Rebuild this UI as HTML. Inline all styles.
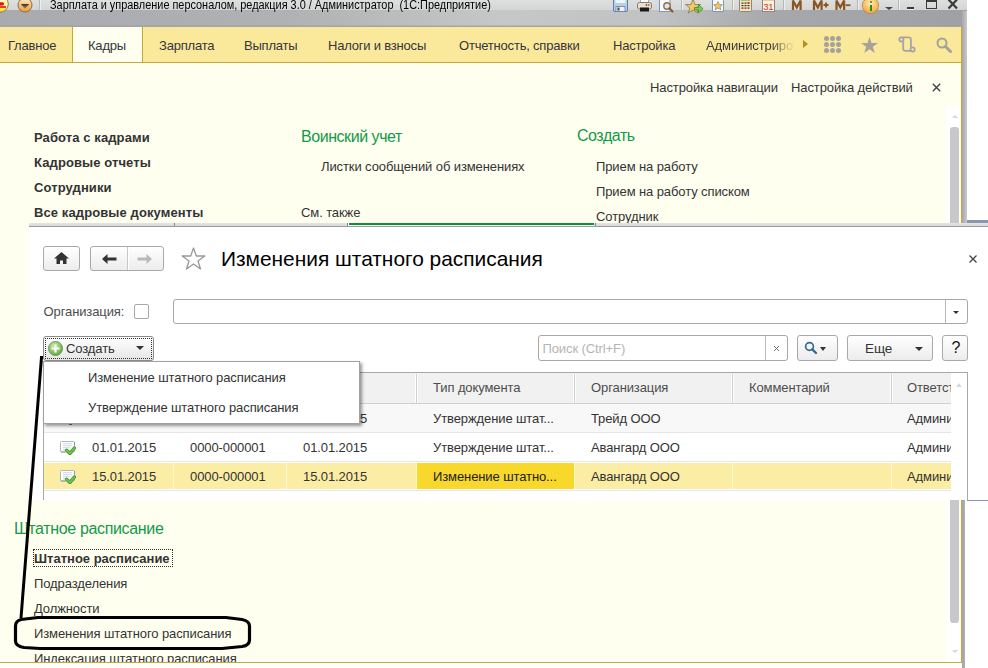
<!DOCTYPE html>
<html><head><meta charset="utf-8"><style>
html,body{margin:0;padding:0;width:988px;height:668px;overflow:hidden;background:#fff;position:relative}
body{font-family:"Liberation Sans",sans-serif}
.t{position:absolute;white-space:pre;font-family:"Liberation Sans",sans-serif}
</style></head><body>
<div style="position:absolute;left:0px;top:0px;width:967px;height:27px;background:linear-gradient(to bottom,#dedfdf 0,#d4d5d5 10px,#c6c7c8 10px,#c6c7c8 25px,#a4a5ab 26px,#a4a5ab 27px)"></div>
<div style="position:absolute;left:0px;top:10px;width:967px;height:16px;background:linear-gradient(to right,rgba(150,151,155,.6) 0,rgba(150,151,155,.45) 30%,rgba(200,201,201,0) 52%,rgba(150,151,155,.1) 68%,rgba(150,151,155,.65) 80%,rgba(150,151,155,.8) 100%)"></div>
<svg style="position:absolute;left:0;top:0" width="40" height="16" viewBox="0 0 40 16"><defs><linearGradient id="lg1" x1="0" y1="0" x2="0" y2="1"><stop offset="0" stop-color="#fffbe0"/><stop offset=".55" stop-color="#fff7a0"/><stop offset="1" stop-color="#f8e000"/></linearGradient><linearGradient id="lg2" x1="0" y1="0" x2="0" y2="1"><stop offset="0" stop-color="#fff3dc"/><stop offset=".5" stop-color="#f8c070"/><stop offset="1" stop-color="#f0a030"/></linearGradient><linearGradient id="lg3" x1="0" y1="0" x2="0" y2="1"><stop offset="0" stop-color="#3a3328"/><stop offset="1" stop-color="#9a8a70"/></linearGradient></defs><circle cx="0" cy="4" r="8.3" fill="url(#lg1)" stroke="#9a7a62" stroke-width="1"/><path d="M0 2.2 h2.5 a1.6 1.6 0 1 1 0 3.2 h-2.5z" fill="#e8101a"/><rect x="0" y="6.2" width="6" height="1.6" fill="#e8101a"/><circle cx="25" cy="5" r="7" fill="url(#lg2)" stroke="#8a6a50" stroke-width="1"/><path d="M20.8 4 L29.2 4 L25 8.8 Z" fill="url(#lg3)"/></svg>
<div style="position:absolute;left:39px;top:0px;width:1px;height:10px;background:#b8b8b8;box-shadow:1px 0 0 #eee"></div>
<div class="t" style="left:50px;top:-1.16px;font-size:12px;line-height:12px;color:#000;font-weight:normal;transform:scaleX(0.908);transform-origin:0 0">Зарплата и управление персоналом, редакция 3.0 / Администратор &nbsp;(1С:Предприятие)</div>
<svg style="position:absolute;left:600px;top:0" width="185" height="14" viewBox="0 0 185 14"><g transform="translate(13,0)"><rect x="0.5" y="-2" width="14" height="13.5" rx="1.5" fill="#b8d0ea" stroke="#5d7fa5"/><rect x="2.5" y="-2" width="10" height="5" fill="#eef5fc"/><rect x="3" y="6.5" width="9" height="5" fill="#f0f0f0" stroke="#5d7fa5" stroke-width=".8"/><rect x="4.5" y="7.5" width="2" height="3" fill="#444"/></g><g transform="translate(37,0)"><rect x="3.5" y="-2" width="8" height="5" fill="#fff" stroke="#999" stroke-width=".8"/><rect x="0.5" y="2.5" width="14" height="6.5" rx="2" fill="#eadfd6" stroke="#8d7666"/><rect x="3" y="7.5" width="9" height="4" fill="#1a1a1a"/><circle cx="9.5" cy="5" r=".9" fill="#e02020"/><circle cx="11.8" cy="5" r=".9" fill="#30b030"/></g><g transform="translate(59,0)"><rect x="0.5" y="-2" width="10.5" height="13.5" fill="#f7fafd" stroke="#7a97bb"/><circle cx="8" cy="6" r="3.2" fill="#d8e6f5" stroke="#9a6a40" stroke-width="1.4"/><path d="M10.3 8.3 L13.5 11.5" stroke="#8a5a30" stroke-width="2.2" stroke-linecap="round"/></g><g transform="translate(86,0)"><path d="M7 -1 L9 4.5 L14.5 4.5 L10.2 8 L11.8 13 L7 10 L2.2 13 L3.8 8 L-0.5 4.5 L5 4.5 Z" fill="#f4c860" stroke="#857650" stroke-width=".8"/><path d="M8.5 7.5 h4 v-3 l4.5 4.2 l-4.5 4.2 v-3 h-4z" fill="#7acc50" stroke="#3d8a2a" stroke-width=".8"/></g><g transform="translate(112,0)"><path d="M0.5 -2 H9 L11.5 0.5 V11.5 H0.5 Z" fill="#f7fafd" stroke="#7a97bb"/><path d="M6 1.5 L7.3 4.5 L10.3 4.7 L8 6.7 L8.8 9.8 L6 8 L3.2 9.8 L4 6.7 L1.7 4.7 L4.7 4.5 Z" fill="#f4c860" stroke="#857650" stroke-width=".6"/></g><g transform="translate(139,0)"><rect x="0.5" y="-2" width="12" height="13.5" rx="1" fill="#f8e2b8" stroke="#8a8a7a"/><rect x="2" y="-2" width="9" height="2.5" fill="#3aa63a"/><g fill="#333"><rect x="2.5" y="2.5" width="2" height="1.2"/><rect x="5.5" y="2.5" width="2" height="1.2"/><rect x="2.5" y="5" width="2" height="1.2"/><rect x="5.5" y="5" width="2" height="1.2"/><rect x="8.5" y="5" width="2" height="1.2"/><rect x="2.5" y="7.5" width="2" height="1.2"/><rect x="5.5" y="7.5" width="2" height="1.2"/><rect x="8.5" y="7.5" width="2" height="1.2"/></g><rect x="8.5" y="2" width="2" height="2" fill="#e02020"/></g><g transform="translate(162,0)"><rect x="0.5" y="-2" width="12" height="13.5" fill="#fdf2e2" stroke="#8a8a7a"/><rect x="1" y="-2" width="11" height="2.5" fill="#e8a050"/><text x="1.2" y="10.3" font-family="Liberation Sans" font-size="9.5" fill="#e02a1a" letter-spacing="-0.3">31</text></g></svg>
<div style="position:absolute;left:681px;top:0px;width:1px;height:10px;background:#b8b8b8;box-shadow:1px 0 0 #eee"></div>
<div style="position:absolute;left:732px;top:0px;width:1px;height:10px;background:#b8b8b8;box-shadow:1px 0 0 #eee"></div>
<div style="position:absolute;left:783px;top:0px;width:1px;height:10px;background:#b8b8b8;box-shadow:1px 0 0 #eee"></div>
<svg style="position:absolute;left:785px;top:0" width="70" height="12" viewBox="0 0 70 12" fill="none" stroke="#8b5526" stroke-width="2.2" stroke-linejoin="miter"><path d="M8 10 V0.5 L11.8 7.5 L15.6 0.5 V10"/><path d="M29 10 V0.5 L32.8 7.5 L36.6 0.5 V10"/><path d="M38.5 5 H43.5 M41 2.5 V7.5" stroke-width="1.8"/><path d="M51.5 10 V0.5 L55.3 7.5 L59.1 0.5 V10"/><path d="M60.5 5.2 H65.5" stroke-width="1.8"/></svg>
<div style="position:absolute;left:857px;top:0px;width:1px;height:10px;background:#b8b8b8;box-shadow:1px 0 0 #eee"></div>
<div style="position:absolute;left:863px;top:-2px;width:15px;height:15px;border-radius:50%;background:radial-gradient(circle at 50% 35%,#ffe9b0,#f4b34a 70%,#d98b2a);box-shadow:0 0 0 1px #c68a40"></div>
<div style="position:absolute;left:869.5px;top:4.5px;width:2.5px;height:6px;background:#2a8a2a"></div>
<div style="position:absolute;left:869.5px;top:1px;width:2.5px;height:2.2px;background:#2a8a2a;border-radius:1px"></div>
<div style="position:absolute;left:885px;top:7px;width:0;height:0;border-left:4.5px solid transparent;border-right:4.5px solid transparent;border-top:3px solid #444"></div>
<div style="position:absolute;left:898px;top:0px;width:1px;height:10px;background:#b8b8b8;box-shadow:1px 0 0 #eee"></div>
<div style="position:absolute;left:907px;top:7px;width:7px;height:2px;background:#3a3a3a;box-shadow:0 1px 0 #eee"></div>
<div style="position:absolute;left:926px;top:-1px;width:11px;height:10px;border:1.5px solid #3a3a3a;border-top-width:3px;box-sizing:border-box"></div>
<svg style="position:absolute;left:947px;top:-1px" width="12" height="11" viewBox="0 0 12 11"><path d="M1.5 0.5 L10 9.5 M10 0.5 L1.5 9.5" stroke="#3a3a3a" stroke-width="2.2"/></svg>
<div style="position:absolute;left:962px;top:11px;width:5px;height:212px;background:linear-gradient(to right,#a6a7aa,#c9c9cb)"></div>
<div style="position:absolute;left:962px;top:500px;width:3px;height:168px;background:linear-gradient(to right,#a0a3b0,#b0b0b0)"></div>
<div style="position:absolute;left:0px;top:27px;width:962px;height:36px;background:#fbe99b;border-bottom:1px solid #c8a832;border-right:1px solid #c8a832;box-sizing:border-box"></div>
<div style="position:absolute;left:72px;top:27px;width:71px;height:36px;background:#fffff0;border-left:1px solid #c8a832;border-right:1px solid #c8a832;border-bottom:1px solid #c8a832;box-sizing:border-box"></div>
<div class="t" style="left:8px;top:39.00px;font-size:13px;line-height:13px;color:#35353d;font-weight:normal;letter-spacing:-0.2px">Главное</div>
<div class="t" style="left:88px;top:39.00px;font-size:13px;line-height:13px;color:#35353d;font-weight:normal;letter-spacing:-0.2px">Кадры</div>
<div class="t" style="left:159px;top:39.00px;font-size:13px;line-height:13px;color:#35353d;font-weight:normal;letter-spacing:-0.2px">Зарплата</div>
<div class="t" style="left:244px;top:39.00px;font-size:13px;line-height:13px;color:#35353d;font-weight:normal;letter-spacing:-0.2px">Выплаты</div>
<div class="t" style="left:328px;top:39.00px;font-size:13px;line-height:13px;color:#35353d;font-weight:normal;letter-spacing:-0.2px">Налоги и взносы</div>
<div class="t" style="left:459px;top:39.00px;font-size:13px;line-height:13px;color:#35353d;font-weight:normal;letter-spacing:-0.2px">Отчетность, справки</div>
<div class="t" style="left:613px;top:39.00px;font-size:13px;line-height:13px;color:#35353d;font-weight:normal;letter-spacing:-0.2px">Настройка</div>
<div class="t" style="left:706px;top:39.00px;font-size:13px;line-height:13px;color:#3a3a3a;font-weight:normal;letter-spacing:-0.1px;width:87px;overflow:hidden;-webkit-mask-image:linear-gradient(to right,#000 76%,rgba(0,0,0,.3) 92%,rgba(0,0,0,.1) 100%)">Администрирование</div>
<div style="position:absolute;left:803px;top:40px;width:0;height:0;border-top:4.5px solid transparent;border-bottom:4.5px solid transparent;border-left:5.5px solid #b09218"></div>
<svg style="position:absolute;left:824px;top:36px" width="17" height="17" viewBox="0 0 17 17" fill="#a5a29a"><circle cx="2.5" cy="2.5" r="2.5"/><circle cx="2.5" cy="8.5" r="2.5"/><circle cx="2.5" cy="14.5" r="2.5"/><circle cx="8.5" cy="2.5" r="2.5"/><circle cx="8.5" cy="8.5" r="2.5"/><circle cx="8.5" cy="14.5" r="2.5"/><circle cx="14.5" cy="2.5" r="2.5"/><circle cx="14.5" cy="8.5" r="2.5"/><circle cx="14.5" cy="14.5" r="2.5"/></svg>
<svg style="position:absolute;left:861px;top:37px" width="17" height="16" viewBox="0 0 17 16"><path d="M8.5 0 L10.5 6 L17 6 L11.8 9.8 L13.8 16 L8.5 12.2 L3.2 16 L5.2 9.8 L0 6 L6.5 6 Z" fill="#a5a29a"/></svg>
<svg style="position:absolute;left:895px;top:33px" width="22" height="22" viewBox="0 0 22 22" fill="none" stroke="#a3a3aa" stroke-width="1.8"><circle cx="6.4" cy="6.4" r="2.1"/><path d="M6.6 4.4 L13.6 4.4 Q15.9 4.4 15.9 6.7 L15.9 14.5"/><path d="M8.2 8.4 L8.2 15.4 Q8.2 17.8 10.6 17.8 L16.5 17.8"/><circle cx="17.6" cy="16.4" r="2.1"/></svg>
<svg style="position:absolute;left:936px;top:37px" width="16" height="16" viewBox="0 0 16 16" fill="none" stroke="#a5a29a"><circle cx="6" cy="6" r="4.5" stroke-width="2"/><path d="M9.5 9.5 L14.5 14.5" stroke-width="3" stroke-linecap="round"/></svg>
<div style="position:absolute;left:0px;top:63px;width:962px;height:600px;background:#fffff0;border-right:1px solid #c8a832;border-bottom:1px solid #c8a832;box-sizing:border-box"></div>
<div style="position:absolute;left:946px;top:107px;width:15px;height:555px;background:#fff"></div>
<div style="position:absolute;left:950px;top:127px;width:9px;height:496px;background:#c8c8c8;border-radius:3px"></div>
<div style="position:absolute;left:951.5px;top:115px;width:0;height:0;border-left:3px solid transparent;border-right:3px solid transparent;border-bottom:3.5px solid #d8d8d8"></div>
<div style="position:absolute;left:951.5px;top:650px;width:0;height:0;border-left:3px solid transparent;border-right:3px solid transparent;border-top:3.5px solid #d8d8d8"></div>
<div class="t" style="left:650px;top:81.00px;font-size:13px;line-height:13px;color:#333;font-weight:normal;letter-spacing:-0.1px;">Настройка навигации</div>
<div class="t" style="left:791px;top:81.00px;font-size:13px;line-height:13px;color:#333;font-weight:normal;letter-spacing:-0.1px;">Настройка действий</div>
<svg style="position:absolute;left:932px;top:83px" width="9" height="9" viewBox="0 0 9 9"><path d="M.8 .8 L8.2 8.2 M8.2 .8 L.8 8.2" stroke="#444" stroke-width="1.4"/></svg>
<div class="t" style="left:34px;top:131.00px;font-size:13px;line-height:13px;color:#333;font-weight:bold;letter-spacing:0.1px">Работа с кадрами</div>
<div class="t" style="left:34px;top:156.00px;font-size:13px;line-height:13px;color:#333;font-weight:bold;letter-spacing:0.1px">Кадровые отчеты</div>
<div class="t" style="left:34px;top:181.00px;font-size:13px;line-height:13px;color:#333;font-weight:bold;letter-spacing:0.1px">Сотрудники</div>
<div class="t" style="left:34px;top:206.00px;font-size:13px;line-height:13px;color:#333;font-weight:bold;letter-spacing:0.1px">Все кадровые документы</div>
<div class="t" style="left:301px;top:129.46px;font-size:16px;line-height:16px;color:#12994a;font-weight:normal;letter-spacing:-0.45px">Воинский учет</div>
<div class="t" style="left:321px;top:160.00px;font-size:13px;line-height:13px;color:#333;font-weight:normal;letter-spacing:-0.1px;">Листки сообщений об изменениях</div>
<div class="t" style="left:301px;top:206.00px;font-size:13px;line-height:13px;color:#333;font-weight:normal;letter-spacing:-0.1px;">См. также</div>
<div class="t" style="left:577px;top:128.46px;font-size:16px;line-height:16px;color:#12994a;font-weight:normal;letter-spacing:-0.45px">Создать</div>
<div class="t" style="left:596px;top:160.00px;font-size:13px;line-height:13px;color:#333;font-weight:normal;letter-spacing:-0.1px;">Прием на работу</div>
<div class="t" style="left:596px;top:185.00px;font-size:13px;line-height:13px;color:#333;font-weight:normal;letter-spacing:-0.1px;">Прием на работу списком</div>
<div class="t" style="left:596px;top:210.00px;font-size:13px;line-height:13px;color:#333;font-weight:normal;letter-spacing:-0.1px;">Сотрудник</div>
<div class="t" style="left:14px;top:521.46px;font-size:16px;line-height:16px;color:#12994a;font-weight:normal;letter-spacing:-0.35px">Штатное расписание</div>
<div class="t" style="left:34px;top:552.00px;font-size:13px;line-height:13px;color:#333;font-weight:bold;">Штатное расписание</div>
<div style="position:absolute;left:33px;top:549px;width:140px;height:18px;border:1px dotted #333;box-sizing:border-box"></div>
<div class="t" style="left:34px;top:577.00px;font-size:13px;line-height:13px;color:#333;font-weight:normal;letter-spacing:-0.1px;">Подразделения</div>
<div class="t" style="left:34px;top:602.00px;font-size:13px;line-height:13px;color:#333;font-weight:normal;letter-spacing:-0.1px;">Должности</div>
<div class="t" style="left:34px;top:627.00px;font-size:13px;line-height:13px;color:#333;font-weight:normal;letter-spacing:-0.1px;">Изменения штатного расписания</div>
<div class="t" style="left:34px;top:652.00px;font-size:13px;line-height:13px;color:#333;font-weight:normal;letter-spacing:-0.1px;">Индексация штатного расписания</div>
<div style="position:absolute;left:0px;top:662px;width:962px;height:1px;background:#c8a832"></div>
<div style="position:absolute;left:0px;top:663px;width:962px;height:5px;background:#fff"></div>
<div style="position:absolute;left:29px;top:223px;width:959px;height:4px;background:linear-gradient(to bottom,#e4e4e4 0,#dadada 3px,#9c9c9c 3px)"></div>
<div style="position:absolute;left:174px;top:223px;width:1px;height:3px;background:#8a8a8a"></div>
<div style="position:absolute;left:347px;top:223px;width:1px;height:3px;background:#8a8a8a"></div>
<div style="position:absolute;left:595px;top:223px;width:1px;height:3px;background:#8a8a8a"></div>
<div style="position:absolute;left:348px;top:223px;width:246px;height:3px;background:#fff"></div>
<div style="position:absolute;left:349px;top:223px;width:245px;height:2px;background:#0e8f3c"></div>
<div style="position:absolute;left:29px;top:227px;width:959px;height:273px;background:#fff"></div>
<div style="position:absolute;left:43px;top:246px;width:37px;height:25px;border:1px solid #a9a9a9;border-radius:3px;background:linear-gradient(#ffffff,#ececec);box-sizing:border-box"></div>
<svg style="position:absolute;left:54px;top:252px" width="15" height="12" viewBox="0 0 15 12"><path d="M7.5 0 L15 6.5 L12.5 6.5 L12.5 12 L9 12 L9 8.5 L6 8.5 L6 12 L2.5 12 L2.5 6.5 L0 6.5 Z" fill="#333"/></svg>
<div style="position:absolute;left:90px;top:246px;width:74px;height:25px;border:1px solid #a9a9a9;border-radius:3px;background:linear-gradient(#ffffff,#ececec);box-sizing:border-box"></div>
<div style="position:absolute;left:127px;top:247px;width:1px;height:23px;background:#c8c8c8;box-shadow:1px 0 0 #fff"></div>
<svg style="position:absolute;left:102px;top:254px" width="15" height="10" viewBox="0 0 15 10"><path d="M0 5 L5.5 0 L5.5 3.5 L14.5 3.5 L14.5 6.5 L5.5 6.5 L5.5 10 Z" fill="#333"/></svg>
<svg style="position:absolute;left:137px;top:254px" width="15" height="10" viewBox="0 0 15 10"><path d="M15 5 L9.5 0 L9.5 3.5 L0.5 3.5 L0.5 6.5 L9.5 6.5 L9.5 10 Z" fill="#b9b9b9"/></svg>
<svg style="position:absolute;left:181px;top:247px" width="25" height="23" viewBox="0 0 25 23"><path d="M12.5 1 L15.3 9 L23.8 9 L17 14 L19.5 22 L12.5 17 L5.5 22 L8 14 L1.2 9 L9.7 9 Z" fill="#fff" stroke="#999" stroke-width="1.3" stroke-linejoin="round"/></svg>
<div class="t" style="left:221px;top:249.31px;font-size:20.9px;line-height:20.9px;color:#000;font-weight:normal;">Изменения штатного расписания</div>
<svg style="position:absolute;left:969px;top:255px" width="8" height="8" viewBox="0 0 8 8"><path d="M.5 .5 L7.5 7.5 M7.5 .5 L.5 7.5" stroke="#444" stroke-width="1.3"/></svg>
<div class="t" style="left:43.5px;top:305.00px;font-size:13px;line-height:13px;color:#4d4d4d;font-weight:normal;letter-spacing:-0.1px;">Организация:</div>
<div style="position:absolute;left:134px;top:304px;width:15px;height:15px;border:1px solid #a8a8a8;border-radius:2px;background:#fff;box-sizing:border-box"></div>
<div style="position:absolute;left:173px;top:299px;width:795px;height:25px;border:1px solid #a8a8a8;border-radius:3px;background:#fff;box-sizing:border-box"></div>
<div style="position:absolute;left:945px;top:300px;width:1px;height:23px;background:#b8b8b8"></div>
<div style="position:absolute;left:953px;top:311px;width:0;height:0;border-left:3px solid transparent;border-right:3px solid transparent;border-top:3px solid #333"></div>
<div style="position:absolute;left:43px;top:336px;width:111px;height:25px;border:1px solid #8c8c8c;border-radius:3px;background:linear-gradient(#ffffff,#e6e6e6);box-sizing:border-box"></div>
<div style="position:absolute;left:45px;top:338px;width:107px;height:21px;border:1px dotted #333;box-sizing:border-box"></div>
<svg style="position:absolute;left:48px;top:341px" width="15" height="15" viewBox="0 0 15 15"><defs><radialGradient id="pg" cx=".4" cy=".3" r=".8"><stop offset="0" stop-color="#c8e8a8"/><stop offset=".6" stop-color="#84c060"/><stop offset="1" stop-color="#5a9a3a"/></radialGradient></defs><circle cx="7.5" cy="7.5" r="7" fill="url(#pg)" stroke="#6a9a58" stroke-width="1"/><path d="M7.5 3.5 V11.5 M3.5 7.5 H11.5" stroke="#fff" stroke-width="2.2"/></svg>
<div class="t" style="left:66px;top:342.00px;font-size:13px;line-height:13px;color:#333;font-weight:normal;letter-spacing:-0.1px;">Создать</div>
<div style="position:absolute;left:136px;top:346px;width:0;height:0;border-left:4px solid transparent;border-right:4px solid transparent;border-top:4px solid #333"></div>
<div style="position:absolute;left:538px;top:335px;width:250px;height:26px;border:1px solid #a8a8a8;border-radius:3px;background:#fff;box-sizing:border-box"></div>
<div style="position:absolute;left:765px;top:336px;width:1px;height:24px;background:#b8b8b8"></div>
<div class="t" style="left:542.5px;top:342.00px;font-size:13px;line-height:13px;color:#b4b4b4;font-weight:normal;letter-spacing:-0.1px;">Поиск (Ctrl+F)</div>
<svg style="position:absolute;left:773px;top:345px" width="7" height="7" viewBox="0 0 7 7"><path d="M1 1 L6 6 M6 1 L1 6" stroke="#666" stroke-width="0.9"/></svg>
<div style="position:absolute;left:797px;top:335px;width:41px;height:26px;border:1px solid #a9a9a9;border-radius:3px;background:linear-gradient(#ffffff,#ececec);box-sizing:border-box"></div>
<svg style="position:absolute;left:804px;top:341px" width="14" height="14" viewBox="0 0 14 14" fill="none" stroke="#33689a"><circle cx="5.5" cy="5.5" r="3.9" stroke-width="1.7"/><path d="M8.3 8.3 L12 12" stroke-width="2.4" stroke-linecap="round"/></svg>
<div style="position:absolute;left:820px;top:346.5px;width:0;height:0;border-left:3.5px solid transparent;border-right:3.5px solid transparent;border-top:4px solid #333"></div>
<div style="position:absolute;left:847px;top:335px;width:86px;height:26px;border:1px solid #a9a9a9;border-radius:3px;background:linear-gradient(#ffffff,#ececec);box-sizing:border-box"></div>
<div class="t" style="left:865px;top:342.00px;font-size:13px;line-height:13px;color:#333;font-weight:normal;letter-spacing:-0.1px;font-size:13.5px">Еще</div>
<div style="position:absolute;left:914.5px;top:346.5px;width:0;height:0;border-left:4px solid transparent;border-right:4px solid transparent;border-top:4px solid #333"></div>
<div style="position:absolute;left:942px;top:335px;width:26px;height:26px;border:1px solid #a9a9a9;border-radius:3px;background:linear-gradient(#ffffff,#ececec);box-sizing:border-box"></div>
<div class="t" style="left:951.5px;top:339.96px;font-size:16px;line-height:16px;color:#111;font-weight:normal;">?</div>
<div style="position:absolute;left:43px;top:372px;width:925px;height:128px;border:1px solid #a8a8a8;border-bottom:none;background:#fff;box-sizing:border-box"></div>
<div style="position:absolute;left:44px;top:373px;width:907px;height:31px;background:#f1f1f1;border-bottom:1px solid #d0d0d0;box-sizing:border-box"></div>
<div style="position:absolute;left:173px;top:374px;width:1px;height:29px;background:#cfcfcf;box-shadow:1px 0 0 #fff,-1px 0 0 #fff"></div>
<div style="position:absolute;left:286px;top:374px;width:1px;height:29px;background:#cfcfcf;box-shadow:1px 0 0 #fff,-1px 0 0 #fff"></div>
<div style="position:absolute;left:416px;top:374px;width:1px;height:29px;background:#cfcfcf;box-shadow:1px 0 0 #fff,-1px 0 0 #fff"></div>
<div style="position:absolute;left:574px;top:374px;width:1px;height:29px;background:#cfcfcf;box-shadow:1px 0 0 #fff,-1px 0 0 #fff"></div>
<div style="position:absolute;left:732px;top:374px;width:1px;height:29px;background:#cfcfcf;box-shadow:1px 0 0 #fff,-1px 0 0 #fff"></div>
<div style="position:absolute;left:891px;top:374px;width:1px;height:29px;background:#cfcfcf;box-shadow:1px 0 0 #fff,-1px 0 0 #fff"></div>
<div class="t" style="left:433px;top:381.00px;font-size:13px;line-height:13px;color:#4d4d4d;font-weight:normal;letter-spacing:-0.1px;">Тип документа</div>
<div class="t" style="left:591px;top:381.00px;font-size:13px;line-height:13px;color:#4d4d4d;font-weight:normal;letter-spacing:-0.1px;">Организация</div>
<div class="t" style="left:749px;top:381.00px;font-size:13px;line-height:13px;color:#4d4d4d;font-weight:normal;letter-spacing:-0.1px;">Комментарий</div>
<div class="t" style="left:907px;top:381.00px;font-size:13px;line-height:13px;color:#4d4d4d;font-weight:normal;letter-spacing:-0.1px;width:44px;overflow:hidden;">Ответственный</div>
<div style="position:absolute;left:44px;top:404px;width:907px;height:28px;background:#f8f8f8"></div>
<div style="position:absolute;left:44px;top:432px;width:907px;height:1px;background:#e6e6e6"></div>
<div style="position:absolute;left:44px;top:461px;width:907px;height:1px;background:#e6e6e6"></div>
<div style="position:absolute;left:44px;top:463px;width:907px;height:26px;background:#fbeda3"></div>
<div style="position:absolute;left:417px;top:463px;width:157px;height:26px;background:#f8d82a"></div>
<div style="position:absolute;left:173px;top:463px;width:1px;height:26px;background:#fff6cc"></div>
<div style="position:absolute;left:286px;top:463px;width:1px;height:26px;background:#fff6cc"></div>
<div style="position:absolute;left:416px;top:463px;width:1px;height:26px;background:#fff6cc"></div>
<div style="position:absolute;left:574px;top:463px;width:1px;height:26px;background:#fff6cc"></div>
<div style="position:absolute;left:732px;top:463px;width:1px;height:26px;background:#fff6cc"></div>
<div style="position:absolute;left:891px;top:463px;width:1px;height:26px;background:#fff6cc"></div>
<div style="position:absolute;left:44px;top:490px;width:907px;height:1px;background:#e6e6e6"></div>
<div style="position:absolute;left:951px;top:373px;width:16px;height:127px;background:#fff"></div>
<div style="position:absolute;left:956px;top:383px;width:0;height:0;border-left:3.5px solid transparent;border-right:3.5px solid transparent;border-bottom:4px solid #d8d8d8"></div>
<div class="t" style="left:92px;top:411.50px;font-size:13px;line-height:13px;color:#333;font-weight:normal;letter-spacing:-0.1px;">01.01.2015</div>
<div class="t" style="left:190px;top:411.50px;font-size:13px;line-height:13px;color:#333;font-weight:normal;letter-spacing:-0.1px;">0000-000001</div>
<div class="t" style="left:303px;top:411.50px;font-size:13px;line-height:13px;color:#333;font-weight:normal;letter-spacing:-0.1px;">01.01.2015</div>
<div class="t" style="left:433px;top:411.50px;font-size:13px;line-height:13px;color:#333;font-weight:normal;letter-spacing:-0.1px;">Утверждение штат...</div>
<div class="t" style="left:591px;top:411.50px;font-size:13px;line-height:13px;color:#333;font-weight:normal;letter-spacing:-0.1px;">Трейд ООО</div>
<div class="t" style="left:907px;top:411.50px;font-size:13px;line-height:13px;color:#333;font-weight:normal;letter-spacing:-0.1px;width:44px;overflow:hidden;">Админи</div>
<div class="t" style="left:92px;top:440.50px;font-size:13px;line-height:13px;color:#333;font-weight:normal;letter-spacing:-0.1px;">01.01.2015</div>
<div class="t" style="left:190px;top:440.50px;font-size:13px;line-height:13px;color:#333;font-weight:normal;letter-spacing:-0.1px;">0000-000001</div>
<div class="t" style="left:303px;top:440.50px;font-size:13px;line-height:13px;color:#333;font-weight:normal;letter-spacing:-0.1px;">01.01.2015</div>
<div class="t" style="left:433px;top:440.50px;font-size:13px;line-height:13px;color:#333;font-weight:normal;letter-spacing:-0.1px;">Утверждение штат...</div>
<div class="t" style="left:591px;top:440.50px;font-size:13px;line-height:13px;color:#333;font-weight:normal;letter-spacing:-0.1px;">Авангард ООО</div>
<div class="t" style="left:907px;top:440.50px;font-size:13px;line-height:13px;color:#333;font-weight:normal;letter-spacing:-0.1px;width:44px;overflow:hidden;">Админи</div>
<svg style="position:absolute;left:60px;top:441px" width="16" height="14" viewBox="0 0 16 14"><rect x="0.5" y="0.5" width="14" height="10.5" rx="1" fill="#fff" stroke="#a9b6c4"/><path d="M14.5 1 V4 M1 11 H5" stroke="#8796a8" stroke-width="1"/><path d="M3 2.7 H12 M3 4.7 H12 M3 6.7 H10 M3 8.7 H5" stroke="#cfd8e2" stroke-width="1"/><path d="M6.6 9.3 L10 12.4 L14.4 7" fill="none" stroke="#3e8f2a" stroke-width="3.4" stroke-linecap="round" stroke-linejoin="round"/><path d="M6.6 9.3 L10 12.4 L14.4 7" fill="none" stroke="#6cc24a" stroke-width="2" stroke-linecap="round" stroke-linejoin="round"/></svg>
<div class="t" style="left:92px;top:469.50px;font-size:13px;line-height:13px;color:#333;font-weight:normal;letter-spacing:-0.1px;">15.01.2015</div>
<div class="t" style="left:190px;top:469.50px;font-size:13px;line-height:13px;color:#333;font-weight:normal;letter-spacing:-0.1px;">0000-000001</div>
<div class="t" style="left:303px;top:469.50px;font-size:13px;line-height:13px;color:#333;font-weight:normal;letter-spacing:-0.1px;">15.01.2015</div>
<div class="t" style="left:433px;top:469.50px;font-size:13px;line-height:13px;color:#222;font-weight:normal;letter-spacing:-0.1px;">Изменение штатно...</div>
<div class="t" style="left:591px;top:469.50px;font-size:13px;line-height:13px;color:#333;font-weight:normal;letter-spacing:-0.1px;">Авангард ООО</div>
<div class="t" style="left:907px;top:469.50px;font-size:13px;line-height:13px;color:#333;font-weight:normal;letter-spacing:-0.1px;width:44px;overflow:hidden;">Админи</div>
<svg style="position:absolute;left:60px;top:470px" width="16" height="14" viewBox="0 0 16 14"><rect x="0.5" y="0.5" width="14" height="10.5" rx="1" fill="#fff" stroke="#a9b6c4"/><path d="M14.5 1 V4 M1 11 H5" stroke="#8796a8" stroke-width="1"/><path d="M3 2.7 H12 M3 4.7 H12 M3 6.7 H10 M3 8.7 H5" stroke="#cfd8e2" stroke-width="1"/><path d="M6.6 9.3 L10 12.4 L14.4 7" fill="none" stroke="#3e8f2a" stroke-width="3.4" stroke-linecap="round" stroke-linejoin="round"/><path d="M6.6 9.3 L10 12.4 L14.4 7" fill="none" stroke="#6cc24a" stroke-width="2" stroke-linecap="round" stroke-linejoin="round"/></svg>
<div style="position:absolute;left:967px;top:220px;width:21px;height:3px;background:#8a96b0"></div>
<div style="position:absolute;left:967px;top:500px;width:21px;height:1px;background:#8a96b0"></div>
<div style="position:absolute;left:43px;top:361px;width:317px;height:63px;background:#fff;border:1px solid #a0a0a0;box-sizing:border-box;box-shadow:2px 2px 3px rgba(0,0,0,.4)"></div>
<div style="position:absolute;left:69px;top:424px;width:3px;height:1px;background:#2a6a1a"></div>
<div class="t" style="left:88px;top:370.50px;font-size:13px;line-height:13px;color:#333;font-weight:normal;letter-spacing:-0.1px;">Изменение штатного расписания</div>
<div class="t" style="left:88px;top:401.00px;font-size:13px;line-height:13px;color:#333;font-weight:normal;letter-spacing:-0.1px;">Утверждение штатного расписания</div>
<svg style="position:absolute;left:0;top:0" width="988" height="668" viewBox="0 0 988 668"><path d="M41.6 356 L21 618" fill="none" stroke="#000" stroke-width="3"/><path d="M38 617.5 L226 617.5 L242 619.5 Q249.5 621 249.5 626 L249.5 640 Q249.5 645.5 242 646.5 L222 648.5 L40 648.5 L24 647.5 Q15.5 646 15.5 641 L15.5 626 Q15.5 621 21 619.5 L38 617.5 Z" fill="none" stroke="#000" stroke-width="3.2" stroke-linejoin="round"/></svg>
</body></html>
